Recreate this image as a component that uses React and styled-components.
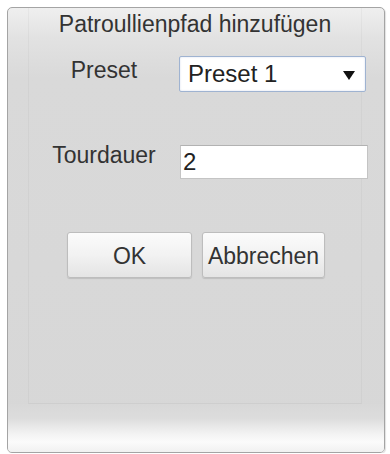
import React from "react";
import styled, { createGlobalStyle } from "styled-components";

const GlobalStyle = createGlobalStyle`
  html, body {
    margin: 0;
    padding: 0;
    background: #ffffff;
  }
  body {
    font-family: "Liberation Sans", Arial, sans-serif;
  }
  * {
    box-sizing: border-box;
  }
`;

const Window = styled.div`
  width: 378px;
  height: 446px;
  margin: 7px 0 0 7px;
  display: flex;
  flex-direction: column;
  border: 1px solid #a4a4a4;
  border-radius: 5px;
  overflow: hidden;
  background: linear-gradient(
    to bottom,
    #efefef 0px,
    #e2e2e2 30px,
    #d9d9d9 70px,
    #d7d7d7 100%
  );
  box-shadow: 1px 1px 1px rgba(0, 0, 0, 0.12);
`;

const Panel = styled.div`
  flex: 1;
  margin: 0 22px 0 20px;
  display: flex;
  flex-direction: column;
  border-left: 1px solid rgba(0, 0, 0, 0.03);
  border-right: 1px solid rgba(0, 0, 0, 0.03);
  border-bottom: 1px solid rgba(0, 0, 0, 0.04);
`;

const Title = styled.div`
  margin-top: 2px;
  height: 28px;
  line-height: 28px;
  font-size: 23px;
  color: #333333;
  text-align: center;
  white-space: nowrap;
`;

const Form = styled.div`
  margin-top: 18px;
  display: grid;
  grid-template-columns: 150px 187px;
  row-gap: 49px;
  align-items: start;
`;

const Label = styled.div`
  height: 28px;
  line-height: 28px;
  font-size: 23px;
  color: #333333;
  text-align: center;
  white-space: nowrap;
`;

const Select = styled.div`
  height: 36px;
  display: flex;
  align-items: center;
  justify-content: space-between;
  padding: 0 10px 0 8px;
  background: #ffffff;
  border: 1px solid #9fb3d1;
  border-radius: 2px;
  box-shadow: inset 0 0 2px rgba(120, 150, 200, 0.35);
  font-size: 24px;
  color: #222222;
  cursor: default;
`;

const Arrow = styled.span`
  width: 0;
  height: 0;
  border-left: 6px solid transparent;
  border-right: 6px solid transparent;
  border-top: 9px solid #111111;
  margin-top: 2px;
`;

const TextInput = styled.input`
  margin: 4px 0 0 1px;
  width: 188px;
  height: 34px;
  padding: 0 2px;
  border: 1px solid #c4c4c4;
  border-top-color: #b2b2b2;
  background: #ffffff;
  font-family: "Liberation Sans", Arial, sans-serif;
  font-size: 24px;
  color: #222222;
  outline: none;
`;

const ButtonRow = styled.div`
  margin: 53px 0 0 38px;
  display: flex;
  gap: 10px;
`;

const Button = styled.button`
  width: ${(p) => p.$width}px;
  height: 46px;
  padding: 2px 0 0;
  border: 1px solid #bdbdbd;
  border-radius: 3px;
  background: linear-gradient(to bottom, #fbfbfb 0%, #f2f2f2 50%, #e4e4e4 100%);
  box-shadow: 0 1px 1px rgba(0, 0, 0, 0.12);
  font-family: "Liberation Sans", Arial, sans-serif;
  font-size: 23px;
  color: #333333;
  cursor: pointer;
`;

const Footer = styled.div`
  height: 48px;
  background: linear-gradient(
    to bottom,
    #d8d8d8 0px,
    #dcdcdc 14px,
    #f3f3f3 30px,
    #fbfbfb 38px,
    #f1f1f1 100%
  );
`;

export default function App() {
  return (
    <>
      <GlobalStyle />
      <Window>
        <Panel>
          <Title>Patroullienpfad hinzufügen</Title>
          <Form>
            <Label>Preset</Label>
            <Select role="combobox">
              <span>Preset 1</span>
              <Arrow />
            </Select>
            <Label>Tourdauer</Label>
            <TextInput defaultValue="2" />
          </Form>
          <ButtonRow>
            <Button $width={125}>OK</Button>
            <Button $width={123}>Abbrechen</Button>
          </ButtonRow>
        </Panel>
        <Footer />
      </Window>
    </>
  );
}
